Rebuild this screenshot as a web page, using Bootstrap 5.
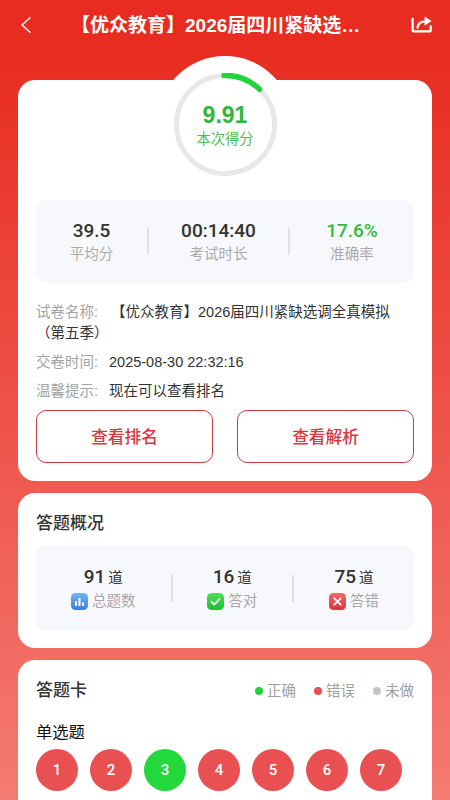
<!DOCTYPE html>
<html lang="zh-CN">
<head>
<meta charset="utf-8">
<title>考试报告</title>
<link href="https://cdn.jsdelivr.net/npm/bootstrap@5.3.0/dist/css/bootstrap.min.css" rel="stylesheet">
<style>
html,body{height:800px;overflow:hidden}
body{font-family:"Liberation Sans","Noto Sans CJK SC",sans-serif;color:#333;background:linear-gradient(180deg,#e82c21 0,#e82c21 50px,#f47b73 800px)}
.top-bar{height:50px;padding:0 18px 0 21px}
.top-title{font-size:19px;font-weight:700;line-height:24px;width:294px;margin-top:2px;margin-left:-6px}
.share-ico{margin-top:-2px}
.page-body{padding:6px 18px 0}
.white-panel{background:#fff;border-radius:17px;padding:0 18px;margin-bottom:12px;display:flow-root}
.panel-score{height:401px;margin-top:24px}
.score-cap{width:136px;height:136px;margin:-24px auto 0;border-radius:50%;background:#fff;padding-top:17px}
.score-ring{width:103px;height:103px;margin:0 auto}
.score-ring svg{display:block}
.score-text{margin-top:-74px;line-height:1}
.score-num{font-size:23px;font-weight:700;color:#2db83a;height:27px;line-height:27px}
.score-lab{font-size:14.3px;color:#4cbc55;line-height:22px;margin-top:-1px}
.soft-box{background:#f7f8fc;border-radius:10px}
.box-a{height:83px;margin-top:8px}
.box-b{height:84px}
.cell-a1{width:111px}.cell-a2{width:139px}.cell-a3{width:124px}
.cell-b1{width:134.5px}.cell-b2{width:119.5px}.cell-b3{width:120px}
.v-line{width:2px;height:27px;background:#dfe1e6;flex:none}
.stat-val{font-family:Roboto,"Liberation Sans",sans-serif;font-size:19px;font-weight:500;line-height:24px;color:#333}
.stat-green{color:#32bc3e}
.stat-lab{font-size:14.5px;line-height:20px;color:#aaa;margin-top:1px}
.info-list{margin-top:19px;font-size:14.5px;line-height:21px;color:#333}
.info-key{color:#a3a3a3;margin-right:11px}
.key-wide{margin-right:13px}
.info-row{margin-bottom:8px}
.info-last{margin-bottom:8px}
.act-row{gap:24px}
.act-btn{flex:1;height:53px;border:1px solid #cf3a40;border-radius:10px;color:#d5373d;font-size:16.7px;font-weight:500;background:#fff;padding:3px 0 0}
.act-btn:hover{color:#d5373d;border-color:#cf3a40;background:#fff}
.panel-over{height:155px}
.panel-card{height:300px}
.head-text{font-size:17px;font-weight:500;line-height:24px;color:#333}
.head-gap{padding-top:19px;margin-bottom:10px}
.num-val{font-family:Roboto,"Liberation Sans","Noto Sans CJK SC",sans-serif;font-size:19px;font-weight:500;line-height:24px;color:#333}
.num-unit{font-family:"Noto Sans CJK SC",sans-serif;font-size:14.5px;font-weight:400;margin-left:3px}
.num-lab{font-size:14.5px;line-height:20px;color:#a8a8a8;gap:4px;margin-top:2px}
.num-lab svg{display:block;flex:none}
.legend-row{gap:18px;font-size:14.5px;color:#a0a0a0;line-height:20px}
.legend-item{gap:4px}
.dot{width:8px;height:8px;border-radius:50%;flex:none}
.dot-ok{background:#23d23b}.dot-no{background:#e95052}.dot-un{background:#c4c4c4}
.card-head{padding-top:19px}
.q-type{font-size:16.3px;line-height:22px;color:#111;margin-top:18px;margin-bottom:6px}
.q-row{gap:12px}
.q-dot{font-family:Roboto,"Liberation Sans",sans-serif;width:42px;height:42px;border-radius:50%;background:#e95052;color:#fff;font-size:15px;font-weight:500}
.q-good{background:#23d83b}
</style>
</head>
<body>
<header class="top-bar d-flex align-items-center justify-content-between text-white">
  <svg width="10" height="16" viewBox="0 0 10 16" fill="none" stroke="#fff" stroke-width="1.4" stroke-linecap="round" stroke-linejoin="round" aria-label="返回"><path d="M9 .8 1 8l8 7.200"/></svg>
  <div class="top-title text-truncate text-center">【优众教育】2026届四川紧缺选调全真模拟（第五季）</div>
  <svg class="share-ico" width="21" height="17" viewBox="0 0 21 17" fill="none" stroke="#fff" stroke-width="2.300" stroke-linejoin="round" stroke-linecap="round" aria-label="分享"><path d="M1.600 3v10.700c0 1 .6 1.700 1.700 1.700h15c1 0 1.400-.7 1.400-1.700V10.500"/><path d="M6.500 11.500c.5-4 3.500-6.200 8.500-6.200"/><path d="M13.600.4 20.500 5l-6.900 4.700z" fill="#fff" stroke="none"/></svg>
</header>
<main class="page-body">
  <section class="white-panel panel-score">
    <div class="score-cap">
      <div class="score-ring">
        <svg width="103" height="103" viewBox="0 0 103 103" fill="none"><circle cx="51.500" cy="51.500" r="49" stroke="#e8e8e8" stroke-width="5"/><path d="M50 2.500A49 49 0 0 1 85.500 16.300" stroke="#23d33b" stroke-width="5.500" stroke-linecap="round"/></svg>
        <div class="score-text text-center">
          <div class="score-num">9.91</div>
          <div class="score-lab">本次得分</div>
        </div>
      </div>
    </div>
    <div class="soft-box box-a d-flex align-items-center">
      <div class="cell-a1 text-center"><div class="stat-val">39.5</div><div class="stat-lab">平均分</div></div>
      <div class="v-line"></div>
      <div class="cell-a2 text-center"><div class="stat-val">00:14:40</div><div class="stat-lab">考试时长</div></div>
      <div class="v-line"></div>
      <div class="cell-a3 text-center"><div class="stat-val stat-green">17.6%</div><div class="stat-lab">准确率</div></div>
    </div>
    <div class="info-list">
      <div class="info-row"><span class="info-key key-wide">试卷名称:</span>【优众教育】2026届四川紧缺选调全真模拟（第五季）</div>
      <div class="info-row"><span class="info-key">交卷时间:</span>2025-08-30 22:32:16</div>
      <div class="info-last"><span class="info-key">温馨提示:</span>现在可以查看排名</div>
    </div>
    <div class="act-row d-flex">
      <button type="button" class="btn act-btn">查看排名</button>
      <button type="button" class="btn act-btn">查看解析</button>
    </div>
  </section>
  <section class="white-panel panel-over">
    <div class="head-text head-gap">答题概况</div>
    <div class="soft-box box-b d-flex align-items-center">
      <div class="cell-b1 text-center">
        <div class="num-val">91<span class="num-unit">道</span></div>
        <div class="num-lab d-flex align-items-center justify-content-center">
          <svg width="17" height="17" viewBox="0 0 17 17"><defs><linearGradient id="gb" x1="0" y1="0" x2="0" y2="1"><stop offset="0" stop-color="#74b3f2"/><stop offset="1" stop-color="#3b7fe0"/></linearGradient></defs><rect width="17" height="17" rx="4.500" fill="url(#gb)"/><path d="M4 8h2v5H4zM7.500 5h2v8h-2zM11 9.500h2V13h-2z" fill="#fff"/></svg>
          总题数
        </div>
      </div>
      <div class="v-line"></div>
      <div class="cell-b2 text-center">
        <div class="num-val">16<span class="num-unit">道</span></div>
        <div class="num-lab d-flex align-items-center justify-content-center">
          <svg width="17" height="17" viewBox="0 0 17 17"><defs><linearGradient id="gg" x1="0" y1="0" x2="0" y2="1"><stop offset="0" stop-color="#4fe05c"/><stop offset="1" stop-color="#22bb3a"/></linearGradient></defs><rect width="17" height="17" rx="4.500" fill="url(#gg)"/><path d="m4.500 8.800 2.800 2.700 5.200-5.500" fill="none" stroke="#fff" stroke-width="1.800" stroke-linecap="round" stroke-linejoin="round"/></svg>
          答对
        </div>
      </div>
      <div class="v-line"></div>
      <div class="cell-b3 text-center">
        <div class="num-val">75<span class="num-unit">道</span></div>
        <div class="num-lab d-flex align-items-center justify-content-center">
          <svg width="17" height="17" viewBox="0 0 17 17"><defs><linearGradient id="gr" x1="0" y1="0" x2="0" y2="1"><stop offset="0" stop-color="#f0686a"/><stop offset="1" stop-color="#d9353c"/></linearGradient></defs><rect width="17" height="17" rx="4.500" fill="url(#gr)"/><path d="m5.300 5.300 6.400 6.400M11.700 5.300l-6.400 6.400" fill="none" stroke="#fff" stroke-width="1.800" stroke-linecap="round"/></svg>
          答错
        </div>
      </div>
    </div>
  </section>
  <section class="white-panel panel-card">
    <div class="card-head d-flex align-items-center justify-content-between">
      <div class="head-text">答题卡</div>
      <div class="legend-row d-flex">
        <div class="legend-item d-flex align-items-center"><span class="dot dot-ok"></span>正确</div>
        <div class="legend-item d-flex align-items-center"><span class="dot dot-no"></span>错误</div>
        <div class="legend-item d-flex align-items-center"><span class="dot dot-un"></span>未做</div>
      </div>
    </div>
    <div class="q-type">单选题</div>
    <div class="q-row d-flex">
      <div class="q-dot d-flex align-items-center justify-content-center">1</div>
      <div class="q-dot d-flex align-items-center justify-content-center">2</div>
      <div class="q-dot q-good d-flex align-items-center justify-content-center">3</div>
      <div class="q-dot d-flex align-items-center justify-content-center">4</div>
      <div class="q-dot d-flex align-items-center justify-content-center">5</div>
      <div class="q-dot d-flex align-items-center justify-content-center">6</div>
      <div class="q-dot d-flex align-items-center justify-content-center">7</div>
    </div>
  </section>
</main>
<script src="https://cdn.jsdelivr.net/npm/bootstrap@5.3.0/dist/js/bootstrap.bundle.min.js"></script>
</body>
</html>
